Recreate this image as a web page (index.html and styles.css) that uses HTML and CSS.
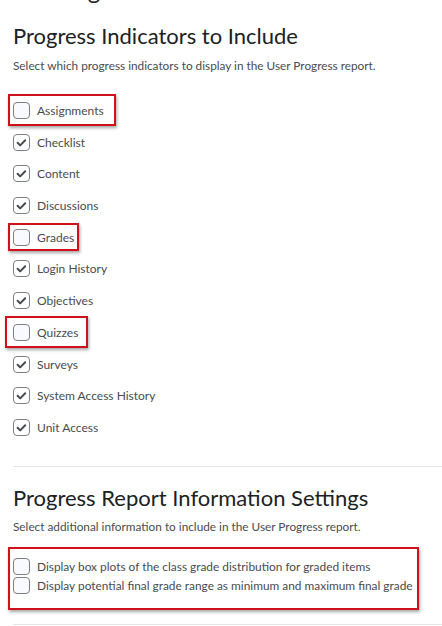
FILE: index.html
```html
<!DOCTYPE html>
<html lang="en">
<head>
    <meta charset="UTF-8">
    <meta name="viewport" content="width=device-width, initial-scale=1.0">
    <title>User Progress Settings</title>
    <link rel="stylesheet" href="styles.css">
</head>
<body>
    <div class="prev-title"><span>Tracking</span></div>

    <section class="panel">
        <h2>Progress Indicators to Include</h2>
        <p class="hint">Select which progress indicators to display in the User Progress report.</p>

        <div class="list">
            <label class="row"><span class="box"></span>Assignments<span class="mark mark-assign"></span></label>
            <label class="row"><span class="box checked"></span>Checklist</label>
            <label class="row"><span class="box checked"></span>Content</label>
            <label class="row"><span class="box checked"></span>Discussions</label>
            <label class="row"><span class="box"></span>Grades<span class="mark mark-grades"></span></label>
            <label class="row"><span class="box checked"></span>Login History</label>
            <label class="row"><span class="box checked"></span>Objectives</label>
            <label class="row"><span class="box"></span>Quizzes<span class="mark mark-quiz"></span></label>
            <label class="row"><span class="box checked"></span>Surveys</label>
            <label class="row"><span class="box checked"></span>System Access History</label>
            <label class="row"><span class="box checked"></span>Unit Access</label>
        </div>
    </section>

    <hr>

    <section class="panel">
        <h2>Progress Report Information Settings</h2>
        <p class="hint hint-tight">Select additional information to include in the User Progress report.</p>

        <div class="options">
            <label class="row"><span class="box"></span>Display box plots of the class grade distribution for graded items</label>
            <label class="row"><span class="box"></span>Display potential final grade range as minimum and maximum final grade</label>
            <span class="mark mark-info"></span>
        </div>
    </section>

    <hr class="last">
</body>
</html>
```

FILE: styles.css
```css
body {
    margin: 0;
    padding: 0 0 0 13px;
    background-color: #ffffff;
    color: #494c4e;
    font-family: Lato, "Open Sans", sans-serif;
}
.prev-title {
    height: 5px;
    overflow: hidden;
}
.prev-title span {
    display: block;
    margin-top: -22px;
    font-size: 24px;
    line-height: 24px;
    color: #202122;
}
h2 {
    margin: 17px 0 0;
    font-size: 22px;
    font-weight: 400;
    line-height: 28px;
    color: #202122;
}
.hint {
    margin: 8px 0 0;
    font-size: 11.8px;
    line-height: 16px;
}
.hint-tight {
    margin-top: 7px;
}
.list {
    margin-top: 27.5px;
    display: flex;
    flex-direction: column;
    gap: 13.7px;
}
.row {
    position: relative;
    display: flex;
    align-items: center;
    gap: 7px;
    height: 18px;
    font-size: 12px;
    white-space: nowrap;
}
.box {
    box-sizing: border-box;
    width: 17px;
    height: 17px;
    flex-shrink: 0;
    border: 1px solid #7c8185;
    border-radius: 4px;
    background-color: #f8faff;
}
.box.checked {
    background: #ffffff url("data:image/svg+xml,%3Csvg xmlns='http://www.w3.org/2000/svg' viewBox='0 0 17 17'%3E%3Cpath d='M4.6 8.8l2.6 2.6 5-5.2' fill='none' stroke='%23494c4e' stroke-width='2' stroke-linecap='round' stroke-linejoin='round'/%3E%3C/svg%3E") center / 17px 17px no-repeat;
}
.mark {
    position: absolute;
    box-sizing: border-box;
    border: 2px solid #d0101a;
    box-shadow: 1px 2px 3px rgba(0, 0, 0, 0.35);
    pointer-events: none;
}
.mark-assign {
    left: -5px;
    top: -8px;
    width: 108px;
    height: 32px;
}
.mark-grades {
    left: -5px;
    top: -5px;
    width: 71px;
    height: 28px;
}
.mark-quiz {
    left: -8px;
    top: -7px;
    width: 83px;
    height: 32px;
}
hr {
    margin: 30px 0 0;
    border: none;
    border-top: 1px solid #e3e5e8;
}
hr.last {
    margin-top: 29px;
}
.options {
    position: relative;
    margin-top: 22.5px;
    display: flex;
    flex-direction: column;
    gap: 1px;
}
.options .row {
    font-size: 11.88px;
}
.mark-info {
    left: -5px;
    top: -11px;
    width: 411px;
    height: 63px;
}
```
